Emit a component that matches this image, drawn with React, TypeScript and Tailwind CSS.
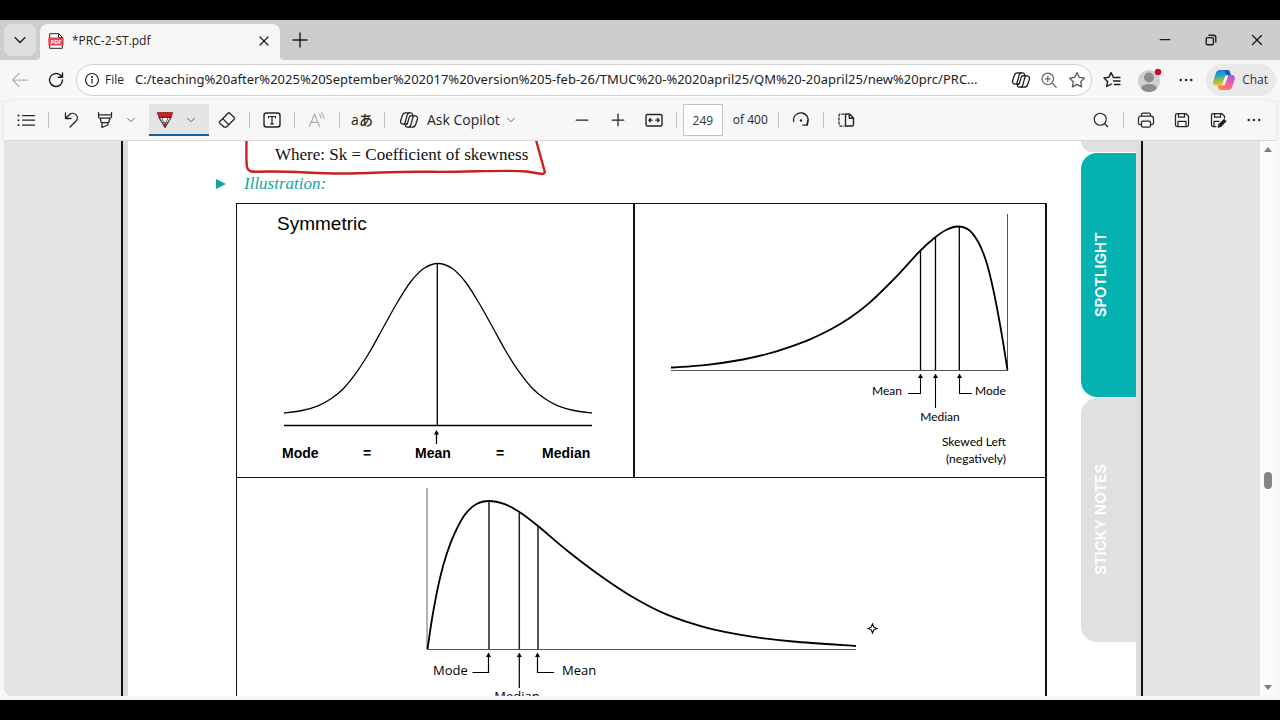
import React, { useState } from 'react';
import { Minus, Plus, Search, X, ChevronDown } from 'lucide-react';

const uiFont = "font-['Open_Sans','Noto_Sans',sans-serif]";

type IconProps = { className?: string; children: React.ReactNode };

function Icon({ className = 'w-5 h-5', children }: IconProps) {
  return (
    <svg
      viewBox="0 0 20 20"
      className={className}
      fill="none"
      stroke="currentColor"
      strokeWidth="1.25"
      strokeLinecap="round"
      strokeLinejoin="round"
      aria-hidden="true"
    >
      {children}
    </svg>
  );
}

function CopilotOutline() {
  return (
    <Icon>
      <path d="M8.300 14.100H4.100c-1.900 0-3-1.600-2.500-3.400l1.600-5c.5-1.700 1.700-2.900 3.400-2.900h4.900c1 0 1.700.6 2 1.500l.5 1.600" />
      <path d="M11.700 5.900h4.200c1.900 0 3 1.600 2.500 3.400l-1.600 5c-.5 1.700-1.700 2.900-3.400 2.900H8.500c-1 0-1.700-.6-2-1.500L6 14.100" />
      <path d="M9.800 2.900c-.8.300-1.200.9-1.500 1.800L5.700 14M10.200 17.100c.8-.3 1.200-.9 1.500-1.800L14.300 6M11.700 5.900c-.8.100-1.200.6-1.400 1.300l-1.700 5.600c-.2.700-.6 1.100-1.200 1.300" />
    </Icon>
  );
}

function CopilotColor() {
  return (
    <svg viewBox="0 0 24 24" className="w-6 h-6" aria-hidden="true">
      <defs>
        <linearGradient id="cpLeft" x1="0" y1="0" x2="0.2" y2="1">
          <stop offset="0" stopColor="#1f6fe0" />
          <stop offset="0.4" stopColor="#22a6c4" />
          <stop offset="0.7" stopColor="#8cc04b" />
          <stop offset="1" stopColor="#f5c518" />
        </linearGradient>
        <linearGradient id="cpRight" x1="0.8" y1="0" x2="0.2" y2="1">
          <stop offset="0" stopColor="#a259e8" />
          <stop offset="0.5" stopColor="#f0609a" />
          <stop offset="1" stopColor="#ff8a3c" />
        </linearGradient>
      </defs>
      <path fill="url(#cpLeft)" d="M8 2h7.2c1.300 0 2.200.7 2.600 1.900l1 3.100h-3.300c-1.300 0-2.200.7-2.600 1.900l-1.900 6.100c-.5 1.600-1.300 2.500-3 2.500H4.200c-2.300 0-3.600-1.800-3-4.200L3.800 5.200C4.500 3.100 6 2 8 2z" />
      <path fill="url(#cpRight)" d="M16 22H9.200c-1.500 0-2.600-.8-3-2.100l-.7-2.400h2.700c1.500 0 2.300-.8 2.800-2.500l1.900-6.100c.4-1.200 1.300-1.900 2.600-1.900h4.300c2.300 0 3.600 1.800 3 4.200l-2.600 7.600C19.500 20.900 18 22 16 22z" />
      <path fill="#1552c4" d="M12.500 2h2.700c1.300 0 2.200.7 2.600 1.900l1 3.100h-3.300c-.9 0-1.500-.5-1.800-1.400z" />
      <path fill="#f5f5f5" d="M12.900 8.900c.2-.7.600-1.200 1.100-1.500h2.200L13.100 16.400c-.3.600-.7.900-1.200 1.100H9.800z" />
    </svg>
  );
}

function StarIcon() {
  return (
    <Icon>
      <path d="m10 2.600 2.300 4.800 5.200.7-3.800 3.600.9 5.200-4.600-2.500-4.600 2.500.9-5.200L2.500 8.100l5.200-.7z" />
    </Icon>
  );
}

function MoreIcon() {
  return (
    <svg viewBox="0 0 20 20" className="w-5 h-5" fill="currentColor" aria-hidden="true">
      <circle cx="4.700" cy="10" r="1.200" />
      <circle cx="10" cy="10" r="1.200" />
      <circle cx="15.300" cy="10" r="1.200" />
    </svg>
  );
}

function ToolButton({ label, className = 'w-9', children }: { label: string; className?: string; children: React.ReactNode }) {
  return (
    <button type="button" aria-label={label} className={`h-8 shrink-0 flex items-center justify-center rounded ${className}`}>
      {children}
    </button>
  );
}

function Divider() {
  return <div className="w-px h-4 mx-1 shrink-0 bg-[#c2c2c2]" />;
}

function TabStrip() {
  return (
    <div className="flex h-10 bg-[#cdcdcd] pl-1">
      <button type="button" aria-label="Tab actions" className="mt-1 w-8 h-8 rounded-lg bg-[#dfdfdf] flex items-center justify-center">
        <Icon>
          <path d="m5 7.500 5 5 5-5" />
        </Icon>
      </button>
      <svg viewBox="0 0 4 4" className="w-1 h-1 self-end" aria-hidden="true">
        <path d="M4 0v4H0a4 4 0 0 0 4-4z" fill="#f7f7f7" />
      </svg>
      <div className="mt-1 w-60 rounded-t-lg bg-[#f7f7f7] flex items-center pl-2 pr-1.5 pb-0.5">
        <svg viewBox="0 0 16 16" className="w-4 h-4" aria-hidden="true">
          <path d="M1.700.7h9l3.600 3.600v11H1.700z" fill="#fff" stroke="#222" strokeWidth="1" />
          <path d="M10.500.7v3.800h3.800" fill="none" stroke="#222" strokeWidth="1" />
          <rect x="0.300" y="4.500" width="15.400" height="8" rx="1" fill="#e5484d" />
          <text x="8" y="10.500" fontSize="5.500" fontWeight="700" textAnchor="middle" fill="#fff" fontFamily="Open Sans, sans-serif">PDF</text>
        </svg>
        <span className="ml-2 text-xs text-[#222]">*PRC-2-ST.pdf</span>
        <button type="button" aria-label="Close tab" className="ml-auto w-5 h-5 flex items-center justify-center">
          <X className="w-4 h-4" strokeWidth={1.800} />
        </button>
      </div>
      <svg viewBox="0 0 4 4" className="w-1 h-1 self-end" aria-hidden="true">
        <path d="M0 0v4h4a4 4 0 0 1-4-4z" fill="#f7f7f7" />
      </svg>
      <button type="button" aria-label="New tab" className="w-8 flex items-center justify-center">
        <Plus className="w-6 h-6" strokeWidth={1.400} />
      </button>
      <div className="ml-auto flex">
        <button type="button" aria-label="Minimize" className="w-[46px] flex items-center justify-center">
          <Icon className="w-4 h-4"><path d="M4 9.500h12" strokeWidth="1.600" /></Icon>
        </button>
        <button type="button" aria-label="Restore" className="w-[46px] flex items-center justify-center">
          <Icon className="w-4 h-4">
            <rect x="4" y="7" width="9" height="9" rx="1.500" strokeWidth="1.700" />
            <path d="M7.500 4H13a3 3 0 0 1 3 3v5.500" strokeWidth="1.700" />
          </Icon>
        </button>
        <button type="button" aria-label="Close" className="w-[46px] flex items-center justify-center">
          <X className="w-[18px] h-[18px]" strokeWidth={1.800} />
        </button>
      </div>
    </div>
  );
}

function AddressBar() {
  const [url, setUrl] = useState(
    'C:/teaching%20after%2025%20September%202017%20version%205-feb-26/TMUC%20-%2020april25/QM%20-20april25/new%20prc/PRC...'
  );

  return (
    <div className="flex items-center h-10 pl-0.5 pr-1 bg-[#f7f7f7]">
      <ToolButton label="Back">
        <Icon className="w-5 h-5 text-[#b5b5b5]">
          <path d="M17.500 10h-15M9 3.500 2.500 10 9 16.500" />
        </Icon>
      </ToolButton>
      <ToolButton label="Refresh">
        <Icon>
          <path d="M16.500 10a6.500 6.500 0 1 1-2.200-4.900L16.200 7M16.500 3v4.200h-4.200" strokeWidth="1.400" />
        </Icon>
      </ToolButton>
      <div className="flex-1 min-w-0 h-8 ml-0.5 flex items-center rounded-full border border-[#cfcfcf] bg-white pl-1.5">
        <Icon className="w-[18px] h-[18px] shrink-0">
          <circle cx="10" cy="10" r="7.200" />
          <path d="M10 9.200v4.300" />
          <circle cx="10" cy="6.700" r="0.500" fill="currentColor" />
        </Icon>
        <label htmlFor="address" className="ml-1 w-[30px] text-xs font-medium text-[#222]">File</label>
        <input
          id="address"
          type="text"
          value={url}
          onChange={(e) => setUrl(e.target.value)}
          className="flex-1 min-w-0 text-[13px] text-[#222] bg-transparent outline-none font-['Noto_Sans',sans-serif]"
        />
        <ToolButton label="Copilot" className="w-7"><CopilotOutline /></ToolButton>
        <ToolButton label="Zoom" className="w-7 text-[#666]">
          <Icon>
            <circle cx="8.800" cy="8.800" r="5.800" />
            <path d="m13.200 13.200 4 4M8.800 6.300v5M6.300 8.800h5" />
          </Icon>
        </ToolButton>
        <ToolButton label="Add to favorites" className="w-7 text-[#555]"><StarIcon /></ToolButton>
      </div>
      <ToolButton label="Favorites" className="w-10">
        <Icon>
          <path d="M11.500 7.300 9 2.600 6.900 7.200 2 7.900l3.600 3.500-.9 5.100 4.500-2.400M12.500 7.500H18M11.500 11H18M12.500 14.500H18" strokeWidth="1.400" />
        </Icon>
      </ToolButton>
      <ToolButton label="Profile" className="w-9">
        <svg viewBox="0 0 26 26" className="w-[26px] h-[26px]" aria-hidden="true">
          <defs>
            <clipPath id="avatarClip"><circle cx="12" cy="14" r="11" /></clipPath>
          </defs>
          <circle cx="12" cy="14" r="11" fill="#d2d0ce" />
          <g clipPath="url(#avatarClip)" fill="#8f8d8b">
            <circle cx="12" cy="10.500" r="5" />
            <ellipse cx="12" cy="21.500" rx="8" ry="4.500" />
          </g>
          <circle cx="21" cy="5" r="3.200" fill="#c50f1f" />
        </svg>
      </ToolButton>
      <ToolButton label="Settings and more" className="w-9"><MoreIcon /></ToolButton>
      <button type="button" className="ml-0.5 h-8 pl-1.5 pr-2 flex items-center gap-1.5 rounded-full bg-[#e9e9e9] text-xs text-[#333]">
        <CopilotColor />
        Chat
      </button>
    </div>
  );
}

function PdfToolbar() {
  const [page, setPage] = useState('249');

  return (
    <div className="px-1 bg-[#f3f3f3]">
      <div className="flex items-center h-10 px-1 rounded-t-lg bg-[#f7f7f7] shadow-[0_0_2px_rgba(0,0,0,0.15)] text-[#242424]">
        <ToolButton label="Table of contents">
          <Icon>
            <path d="M6.500 5.500h12M6.500 10.200h12M6.500 15h12" />
            <path d="M2.500 5.500h.01M2.500 10.200h.01M2.500 15h.01" strokeWidth="2" />
          </Icon>
        </ToolButton>
        <Divider />
        <ToolButton label="Undo">
          <Icon>
            <path d="M4.500 3v5.500H10M4.700 8.200 8.600 4.500a4.600 4.600 0 0 1 6.500 6.500L9 17" strokeWidth="1.300" />
          </Icon>
        </ToolButton>
        <ToolButton label="Highlight" className="w-8">
          <Icon>
            <path d="M3.500 2.500v4.300a1.200 1.200 0 0 0 1.200 1.200h10.600a1.200 1.200 0 0 0 1.200-1.200V2.500M3.500 4.800h13M5 8l1.300 4.500h7.400L15 8M7 12.500v5l6-2.800v-2.200" />
          </Icon>
        </ToolButton>
        <ToolButton label="Highlight colors" className="w-5 mr-2"><ChevronDown className="w-3.5 h-3.5 text-[#555]" strokeWidth={1.500} /></ToolButton>
        <div className="flex h-8 pr-2 bg-[#e4e4e4] border-b-2 border-[#0f62a8]">
          <ToolButton label="Draw" className="w-8">
            <svg viewBox="0 0 20 20" className="w-5 h-5" aria-hidden="true">
              <path d="M4 7.300 10 17.500l6-10.200z" fill="#fff" stroke="#333" strokeWidth="1.200" strokeLinejoin="round" />
              <path d="M2.200 2.500h15.600L16 7.300H4z" fill="#d21f1f" stroke="#7d1d1d" strokeWidth="0.700" />
              <path d="m7 7.500 1.600 5h2.800l1.600-5" fill="none" stroke="#333" strokeWidth="0.800" />
              <path d="m8.300 13.200 1.700 4.300 1.700-4.300z" fill="#a81818" />
            </svg>
          </ToolButton>
          <ToolButton label="Draw properties" className="w-5"><ChevronDown className="w-3.5 h-3.5 text-[#555]" strokeWidth={1.500} /></ToolButton>
        </div>
        <ToolButton label="Erase">
          <Icon>
            <path d="m2.800 11.500 8.300-8.300a1.300 1.300 0 0 1 1.800 0l4.300 4.300a1.300 1.300 0 0 1 0 1.800L9.400 17H7l-4.200-3.800a1.200 1.200 0 0 1 0-1.700zM5.800 8.700l5.700 5.700" />
          </Icon>
        </ToolButton>
        <Divider />
        <ToolButton label="Add text">
          <Icon>
            <rect x="2" y="3" width="16" height="14" rx="2.500" strokeWidth="1.400" />
            <path d="M6.500 8V6.500h7V8M10 6.500v7.300M8.500 13.800h3" strokeWidth="1.200" />
          </Icon>
        </ToolButton>
        <Divider />
        <ToolButton label="Read aloud" className="w-9 text-[#b0b0b0]">
          <Icon>
            <path d="M2.500 16.500 7.500 4l5 12.500M4.200 12.300h6.600M12.500 4.500a5 5 0 0 1 1.600 3.700M14.500 3a7.500 7.500 0 0 1 2.500 5.400" />
          </Icon>
        </ToolButton>
        <Divider />
        <ToolButton label="Translate">
          <span className="text-sm leading-5 font-medium font-['Open_Sans','Noto_Sans_CJK_JP',sans-serif]">aあ</span>
        </ToolButton>
        <Divider />
        <button type="button" className="h-8 pl-2.5 pr-1 flex items-center gap-2 text-sm shrink-0">
          <CopilotOutline />
          Ask Copilot
          <ChevronDown className="w-3.5 h-3.5 -ml-1 text-[#555]" strokeWidth={1.500} />
        </button>

        <div className="flex items-center ml-[42px]">
          <ToolButton label="Zoom out"><Minus className="w-5 h-5" strokeWidth={1.500} /></ToolButton>
          <ToolButton label="Zoom in"><Plus className="w-5 h-5" strokeWidth={1.500} /></ToolButton>
          <ToolButton label="Fit to width">
            <Icon>
              <rect x="2" y="4.500" width="16" height="11.500" rx="1.500" strokeWidth="1.400" />
              <path d="M5 10.200h3.300M15 10.200h-3.300M6.500 8.500 4.800 10.200l1.700 1.700M13.500 8.500l1.700 1.700-1.700 1.700" />
            </Icon>
          </ToolButton>
          <Divider />
          <input
            aria-label="Page number"
            type="text"
            value={page}
            onChange={(e) => setPage(e.target.value)}
            className="ml-0.5 w-10 h-8 border border-[#c4c4c4] bg-white text-center text-xs text-[#333] outline-none"
          />
          <span className="ml-2.5 mr-1.5 text-xs whitespace-nowrap">of 400</span>
          <Divider />
          <ToolButton label="Rotate">
            <Icon>
              <path d="M2.700 11.500a7.300 7.300 0 1 1 13 3M16.500 10.500v4.700h-4.700" strokeWidth="1.300" />
              <circle cx="10" cy="10.500" r="1.200" fill="currentColor" stroke="none" />
            </Icon>
          </ToolButton>
          <Divider />
          <ToolButton label="Page view">
            <Icon>
              <path d="M8 4H4.500A1.500 1.500 0 0 0 3 5.500v9A1.500 1.500 0 0 0 4.500 16H8" strokeDasharray="2.200 1.800" />
              <path d="M9.500 4h4l4 4v6.500a1.500 1.500 0 0 1-1.500 1.500H9.500zM13.300 4v4.200h4.200" strokeWidth="1.400" />
            </Icon>
          </ToolButton>
        </div>

        <div className="flex items-center ml-auto">
          <ToolButton label="Find"><Search className="w-[18px] h-[18px]" strokeWidth={1.500} /></ToolButton>
          <Divider />
          <ToolButton label="Print">
            <Icon>
              <path d="M5.500 6V4.500A1.500 1.500 0 0 1 7 3h6a1.500 1.500 0 0 1 1.500 1.500V6M5.500 14.500H4A1.500 1.500 0 0 1 2.500 13V8.500A2.300 2.300 0 0 1 4.800 6.200h10.400a2.300 2.300 0 0 1 2.300 2.300V13a1.500 1.500 0 0 1-1.500 1.500h-1.500" />
              <rect x="5.500" y="11" width="9" height="6" rx="1.200" />
            </Icon>
          </ToolButton>
          <ToolButton label="Save">
            <Icon>
              <path d="M3.500 5A1.500 1.500 0 0 1 5 3.500h8.700L16.500 6.300V15a1.500 1.500 0 0 1-1.500 1.500H5A1.500 1.500 0 0 1 3.500 15zM6.500 3.700V7h6V3.700M6 16.300v-5h8v5" />
            </Icon>
          </ToolButton>
          <ToolButton label="Save as">
            <Icon>
              <path d="M8 16.500H5A1.500 1.500 0 0 1 3.500 15V5A1.500 1.500 0 0 1 5 3.500h8.700L16.500 6.300V8M6.500 3.700V7h6V3.700M6 16.300v-5h5" />
              <path d="m10.500 17 .6-2.500 5-4.700 1.500 1.500-4.800 4.900z" fill="currentColor" strokeWidth="1.500" />
            </Icon>
          </ToolButton>
          <ToolButton label="More"><MoreIcon /></ToolButton>
        </div>
      </div>
    </div>
  );
}

type Point = [number, number];

// Catmull-Rom spline through the points, as cubic segments
function smoothPath(points: Point[]) {
  let d = `M${points[0][0]} ${points[0][1]}`;
  for (let i = 0; i < points.length - 1; i++) {
    const p0 = points[i - 1] || points[i];
    const p1 = points[i];
    const p2 = points[i + 1];
    const p3 = points[i + 2] || p2;
    d += `C${p1[0] + (p2[0] - p0[0]) / 6} ${p1[1] + (p2[1] - p0[1]) / 6} ${p2[0] - (p3[0] - p1[0]) / 6} ${p2[1] - (p3[1] - p1[1]) / 6} ${p2[0]} ${p2[1]}`;
  }
  return d;
}

const symmetricHalf: Point[] = [
  [154, 149.500], [136, 147], [120, 142.300], [107, 135.300], [94.500, 125], [81, 108.200],
  [67.500, 87], [54.500, 63.500], [41, 39.500], [27.500, 18.500], [14, 4.800], [0, 0],
];
const symmetric: Point[] = [
  ...symmetricHalf.map(([x, y]): Point => [438 - x, 263.500 + y]),
  ...symmetricHalf.slice(0, -1).reverse().map(([x, y]): Point => [438 + x, 263.500 + y]),
];

const skewedLeft: Point[] = [
  [671, 367.500], [707, 364.800], [743, 359.500], [767, 354], [790, 346.800], [810, 339.300], [830, 329.800],
  [850, 317.700], [870, 302.300], [895, 278], [920, 251], [935, 237.500], [947, 229.500], [958, 226.500],
  [969, 230], [979, 243.500], [987, 264], [994, 293], [1001, 330], [1007.500, 370],
];

const skewedRight: Point[] = [
  [427.500, 649], [433, 613], [440, 578], [447, 553], [455, 532.500], [465, 514.500], [476.500, 504], [489.500, 501],
  [504, 503.800], [519, 511.800], [538, 526], [567, 550.500], [600, 575.500], [633, 597.300],
  [667, 614.700], [707, 627.800], [750, 636.300], [793, 641.500], [856, 646],
];

// Upward arrow head with its tip at (x, y)
function ArrowHead({ x, y }: { x: number; y: number }) {
  return <path d={`M${x} ${y}l2.500 4.500h-5z`} fill="#000" stroke="none" />;
}

function SymmetricChart() {
  return (
    <svg viewBox="237 204 396 273" className="block w-full h-auto" fill="none" stroke="#000" role="img" aria-label="Symmetric distribution">
      <text x="277" y="230" fontSize="19" fill="#000" stroke="none" className="font-['Liberation_Sans',sans-serif]">Symmetric</text>
      <path strokeWidth="1.300" d={smoothPath(symmetric)} />
      <path strokeWidth="1.300" d="M284 425.500h308M437.300 264v161M436.500 433v11" />
      <ArrowHead x={436.500} y={430} />
      <g fill="#000" stroke="none" fontSize="14" fontWeight="700" className="font-['Liberation_Sans',sans-serif]">
        <text x="282" y="458">Mode</text>
        <text x="363" y="458">=</text>
        <text x="415" y="458">Mean</text>
        <text x="496" y="458">=</text>
        <text x="542" y="458">Median</text>
      </g>
    </svg>
  );
}

function SkewedLeftChart() {
  return (
    <svg viewBox="635 204 410 273" className="block w-full h-auto" fill="none" stroke="#000" role="img" aria-label="Negatively skewed distribution">
      <path stroke="#555" d="M671 370.500h337M1007.500 214v157" />
      <path strokeWidth="1.800" d={smoothPath(skewedLeft)} />
      <path strokeWidth="1.300" d="M920.500 251v119M935.500 237v133M959.300 227v143" />
      <path strokeWidth="1.100" d="M920.500 376v17.500H908M935.500 376v32M959.500 376v17.500H972" />
      <ArrowHead x={920.500} y={373.500} />
      <ArrowHead x={935.500} y={373.500} />
      <ArrowHead x={959.500} y={373.500} />
      <g fill="#000" stroke="none" fontSize="12" className="font-['Lato',sans-serif]">
        <text x="902" y="395" textAnchor="end">Mean</text>
        <text x="975" y="395">Mode</text>
        <text x="940" y="421" textAnchor="middle">Median</text>
        <text x="1006" y="446" textAnchor="end">Skewed Left</text>
        <text x="1006" y="463" textAnchor="end">(negatively)</text>
      </g>
    </svg>
  );
}

function SkewedRightChart() {
  return (
    <svg viewBox="237 478 808 273" className="block w-full h-auto" fill="none" stroke="#000" role="img" aria-label="Positively skewed distribution">
      <path stroke="#999" strokeWidth="1.500" d="M427 488v161" />
      <path stroke="#555" d="M427 649.500h429" />
      <path strokeWidth="1.800" d={smoothPath(skewedRight)} />
      <path strokeWidth="1.500" stroke="#222" d="M489 502v147M519.300 512v137M538 526v123" />
      <path strokeWidth="1.200" d="M488.500 655v17.500H472.500M519.300 655v33M537.500 655v17.500H554" />
      <ArrowHead x={488.500} y={652.500} />
      <ArrowHead x={519.300} y={652.500} />
      <ArrowHead x={537.500} y={652.500} />
      <g fill="#000" stroke="none" fontSize="13" className="font-['Open_Sans',sans-serif]">
        <text x="433" y="675">Mode</text>
        <text x="562" y="675">Mean</text>
        <text x="517" y="701" textAnchor="middle">Median</text>
      </g>
      <path fill="#fff" strokeWidth="1.100" d="m872.500 624 1.300 3.200 3.200 1.300-3.200 1.300-1.300 3.200-1.300-3.200-3.200-1.300 3.200-1.300z" />
    </svg>
  );
}

function SideTab({ label, className }: { label: string; className: string }) {
  return (
    <a
      href="#"
      className={`h-[244px] rounded-l-2xl flex items-center justify-center pr-4 text-white text-[15px] leading-5 font-semibold font-['Inter',sans-serif] ${className}`}
    >
      <span className="[writing-mode:vertical-rl] rotate-180">{label}</span>
    </a>
  );
}

function DocumentPage() {
  return (
    <div className="flex flex-1 max-w-[1022px] mx-auto border-x-2 border-[#111] bg-[#dedede] px-[5px]">
      <div className="flex flex-1 bg-white">
        <div className="relative flex-1 pl-[108px]">
          <p className="pl-[39px] h-7 leading-7 text-[17px] text-[#111] font-['Liberation_Serif',serif]">
            Where: Sk = Coefficient of skewness
          </p>
          <div className="-ml-5 flex items-center h-[34px] pb-1 text-[#12a5a0]">
            <svg viewBox="0 0 10 10" className="w-2.5 h-2.5" aria-hidden="true">
              <path d="M0 0l10 5-10 5z" fill="currentColor" />
            </svg>
            <h2 className="ml-[18px] text-[17px] italic font-['Liberation_Serif',serif]">Illustration:</h2>
          </div>
          <div className="grid grid-cols-[398fr_410fr] border-t border-l border-r-2 border-[#111]">
            <div className="border-r-2 border-b border-[#111]"><SymmetricChart /></div>
            <div className="border-b border-[#111]"><SkewedLeftChart /></div>
            <div className="col-span-2"><SkewedRightChart /></div>
          </div>
          {/* red pen stroke around the formula box */}
          <svg viewBox="0 0 310 40" className="absolute top-0 left-[112px] w-[310px] h-10" fill="none" aria-hidden="true">
            <path
              d="M6.500 -1C6.500 10 6 20 7 26Q8 31 15 30.800C50 29.500 70 32.500 100 32.500C135 32.500 155 30 190 30.800C225 31.500 265 28.500 287 30.500L302 33Q306 33 304 28L296 -1"
              stroke="#c9201f"
              strokeWidth="2.400"
              strokeLinecap="round"
              strokeLinejoin="round"
            />
          </svg>
        </div>
        <nav className="w-[55px] ml-[34px] flex flex-col gap-px" aria-label="Page tabs">
          <div className="h-[11px] rounded-bl-2xl bg-[#e0e0e0]" />
          <SideTab label="SPOTLIGHT" className="bg-[#04b3b1]" />
          <SideTab label="STICKY NOTES" className="bg-[#e0e0e0]" />
        </nav>
      </div>
    </div>
  );
}

function ScrollBar() {
  return (
    <div className="w-4 flex flex-col items-center justify-between py-1.5 bg-[#fbfbfb]" aria-hidden="true">
      <svg viewBox="0 0 8 5" className="w-2 h-[5px]"><path d="M0 5l4-5 4 5z" fill="#7d7d7d" /></svg>
      <div className="flex-1 flex flex-col items-center w-full">
        <div className="grow-[62]" />
        <div className="w-2 h-[17px] rounded-full bg-[#858585]" />
        <div className="grow-[38]" />
      </div>
      <svg viewBox="0 0 8 5" className="w-2 h-[5px]"><path d="M0 0l4 5 4-5z" fill="#7d7d7d" /></svg>
    </div>
  );
}

export default function App() {
  return (
    <div className={`h-screen flex flex-col py-5 bg-black text-[#1b1b1b] ${uiFont}`}>
      <TabStrip />
      <AddressBar />
      <PdfToolbar />
      <div className="flex-1 min-h-0 px-1 pb-1 bg-[#f7f7f7]">
        <main className="flex h-full overflow-hidden rounded-b-lg border-t border-[#d8d8d8] bg-[#e4e4e4]">
          <DocumentPage />
          <ScrollBar />
        </main>
      </div>
    </div>
  );
}
